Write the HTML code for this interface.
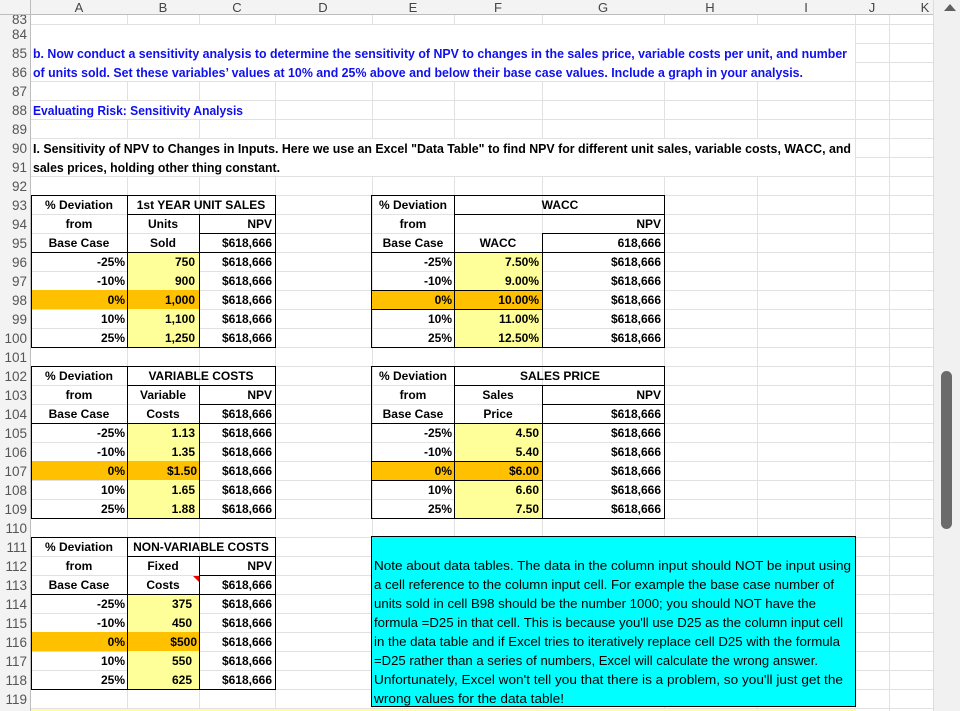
<!DOCTYPE html>
<html><head><meta charset="utf-8"><style>
html,body{margin:0;padding:0;background:#fff;width:960px;height:711px;overflow:hidden}
svg{display:block}
text{font-family:"Liberation Sans",sans-serif}
.h{font-size:13px;fill:#444;text-anchor:middle}
.r{font-size:13.5px;fill:#555;text-anchor:end}
.b{font-size:12px;font-weight:bold;fill:#000}
.c{text-anchor:middle}.e{text-anchor:end}
.n{font-size:12.5px;fill:#000}
.bl{font-size:12.5px;font-weight:bold;fill:#1010ee}
</style></head><body>
<svg width="960" height="711" viewBox="0 0 960 711" xmlns="http://www.w3.org/2000/svg">
<g stroke="#e1e1e1" stroke-width="1">
<line x1="127.5" y1="14" x2="127.5" y2="711"/><line x1="199.5" y1="14" x2="199.5" y2="711"/>
<line x1="275.5" y1="14" x2="275.5" y2="711"/><line x1="372.5" y1="14" x2="372.5" y2="711"/>
<line x1="454.5" y1="14" x2="454.5" y2="711"/><line x1="542.5" y1="14" x2="542.5" y2="711"/>
<line x1="664.5" y1="14" x2="664.5" y2="711"/><line x1="757.5" y1="14" x2="757.5" y2="711"/>
<line x1="855.5" y1="14" x2="855.5" y2="711"/><line x1="889.5" y1="14" x2="889.5" y2="711"/>
<line x1="933.5" y1="14" x2="933.5" y2="711"/>
<line x1="30" y1="24.5" x2="934" y2="24.5"/><line x1="30" y1="43.5" x2="934" y2="43.5"/><line x1="30" y1="62.5" x2="934" y2="62.5"/><line x1="30" y1="81.5" x2="934" y2="81.5"/><line x1="30" y1="100.5" x2="934" y2="100.5"/><line x1="30" y1="119.5" x2="934" y2="119.5"/><line x1="30" y1="138.5" x2="934" y2="138.5"/><line x1="30" y1="157.5" x2="934" y2="157.5"/><line x1="30" y1="176.5" x2="934" y2="176.5"/><line x1="30" y1="195.5" x2="934" y2="195.5"/><line x1="30" y1="214.5" x2="934" y2="214.5"/><line x1="30" y1="233.5" x2="934" y2="233.5"/><line x1="30" y1="252.5" x2="934" y2="252.5"/><line x1="30" y1="271.5" x2="934" y2="271.5"/><line x1="30" y1="290.5" x2="934" y2="290.5"/><line x1="30" y1="309.5" x2="934" y2="309.5"/><line x1="30" y1="328.5" x2="934" y2="328.5"/><line x1="30" y1="347.5" x2="934" y2="347.5"/><line x1="30" y1="366.5" x2="934" y2="366.5"/><line x1="30" y1="385.5" x2="934" y2="385.5"/><line x1="30" y1="404.5" x2="934" y2="404.5"/><line x1="30" y1="423.5" x2="934" y2="423.5"/><line x1="30" y1="442.5" x2="934" y2="442.5"/><line x1="30" y1="461.5" x2="934" y2="461.5"/><line x1="30" y1="480.5" x2="934" y2="480.5"/><line x1="30" y1="499.5" x2="934" y2="499.5"/><line x1="30" y1="518.5" x2="934" y2="518.5"/><line x1="30" y1="537.5" x2="934" y2="537.5"/><line x1="30" y1="556.5" x2="934" y2="556.5"/><line x1="30" y1="575.5" x2="934" y2="575.5"/><line x1="30" y1="594.5" x2="934" y2="594.5"/><line x1="30" y1="613.5" x2="934" y2="613.5"/><line x1="30" y1="632.5" x2="934" y2="632.5"/><line x1="30" y1="651.5" x2="934" y2="651.5"/><line x1="30" y1="670.5" x2="934" y2="670.5"/><line x1="30" y1="689.5" x2="934" y2="689.5"/><line x1="30" y1="708.5" x2="934" y2="708.5"/>
</g>
<rect x="31" y="25" width="824" height="56" fill="#fff"/>
<rect x="31" y="139" width="824" height="37" fill="#fff"/>
<rect x="31" y="101" width="240" height="18" fill="#fff"/>
<rect x="30" y="709" width="826" height="2" fill="#ffff99"/>

<rect x="0" y="14" width="30" height="697" fill="#f3f3f3"/>
<g class="r">
<text x="27" y="24">83</text><text x="27" y="39">84</text><text x="27" y="58">85</text><text x="27" y="77">86</text><text x="27" y="96">87</text><text x="27" y="115">88</text><text x="27" y="134">89</text><text x="27" y="153">90</text><text x="27" y="172">91</text><text x="27" y="191">92</text><text x="27" y="210">93</text><text x="27" y="229">94</text><text x="27" y="248">95</text><text x="27" y="267">96</text><text x="27" y="286">97</text><text x="27" y="305">98</text><text x="27" y="324">99</text><text x="27" y="343">100</text><text x="27" y="362">101</text><text x="27" y="381">102</text><text x="27" y="400">103</text><text x="27" y="419">104</text><text x="27" y="438">105</text><text x="27" y="457">106</text><text x="27" y="476">107</text><text x="27" y="495">108</text><text x="27" y="514">109</text><text x="27" y="533">110</text><text x="27" y="552">111</text><text x="27" y="571">112</text><text x="27" y="590">113</text><text x="27" y="609">114</text><text x="27" y="628">115</text><text x="27" y="647">116</text><text x="27" y="666">117</text><text x="27" y="685">118</text><text x="27" y="704">119</text>
</g>
<rect x="0" y="0" width="934" height="14" fill="#f3f3f3"/>
<line x1="0" y1="14.5" x2="934" y2="14.5" stroke="#bdbdbd"/>
<line x1="30.5" y1="0" x2="30.5" y2="711" stroke="#bdbdbd"/>
<g class="h">
<text x="79" y="12">A</text><text x="163" y="12">B</text><text x="237" y="12">C</text><text x="323" y="12">D</text><text x="413" y="12">E</text><text x="498" y="12">F</text><text x="603" y="12">G</text><text x="710" y="12">H</text><text x="806" y="12">I</text><text x="872" y="12">J</text><text x="925" y="12">K</text>
</g>

<text class="bl" x="33" y="58" textLength="814" lengthAdjust="spacingAndGlyphs">b.  Now conduct a sensitivity analysis to determine the sensitivity of NPV to changes in the sales price, variable costs per unit, and number</text>
<text class="bl" x="33" y="77" textLength="770" lengthAdjust="spacingAndGlyphs">of units sold.  Set these variables’ values at 10% and 25% above and below their base case values.  Include a graph in your analysis.</text>
<text class="bl" x="33" y="115" textLength="210" lengthAdjust="spacingAndGlyphs">Evaluating Risk:  Sensitivity Analysis</text>
<text class="b" x="33" y="153" textLength="818" lengthAdjust="spacingAndGlyphs" style="font-size:12.5px">I.  Sensitivity of NPV to Changes in Inputs.   Here we use an Excel "Data Table" to find NPV  for different unit sales, variable costs, WACC, and</text>
<text class="b" x="33" y="172" textLength="247" lengthAdjust="spacingAndGlyphs" style="font-size:12.5px">sales prices, holding other thing constant.</text>

<g transform="translate(0,195)">
<rect x="31" y="95" width="96" height="19" fill="#ffc000"/><rect x="128" y="95" width="71" height="19" fill="#ffc000"/>
<rect x="128" y="57" width="71" height="38" fill="#ffff99"/><rect x="128" y="114" width="71" height="38" fill="#ffff99"/>
<g stroke="#000" fill="none"><rect x="31.5" y="0.5" width="244" height="152"/><line x1="127.5" y1="0" x2="127.5" y2="152"/><line x1="199.5" y1="19" x2="199.5" y2="152"/><line x1="127" y1="19.5" x2="276" y2="19.5"/><line x1="199" y1="38.5" x2="276" y2="38.5"/><line x1="31" y1="57.5" x2="276" y2="57.5"/></g>
<g class="b"><text class="c" x="79" y="14">% Deviation</text><text class="c" x="79" y="33">from</text><text class="c" x="79" y="52">Base Case</text>
<text class="c" x="201" y="14">1st YEAR UNIT SALES</text><text class="c" x="163" y="33">Units</text><text class="c" x="163" y="52">Sold</text>
<text class="e" x="272" y="33">NPV</text><text class="e" x="272" y="52">$618,666</text>
<text class="e" x="125" y="71">-25%</text><text class="e" x="125" y="90">-10%</text><text class="e" x="125" y="109">0%</text><text class="e" x="125" y="128">10%</text><text class="e" x="125" y="147">25%</text>
<text class="e" x="195" y="71">750</text><text class="e" x="195" y="90">900</text><text class="e" x="195" y="109">1,000</text><text class="e" x="195" y="128">1,100</text><text class="e" x="195" y="147">1,250</text>
<text class="e" x="272" y="71">$618,666</text><text class="e" x="272" y="90">$618,666</text><text class="e" x="272" y="109">$618,666</text><text class="e" x="272" y="128">$618,666</text><text class="e" x="272" y="147">$618,666</text></g>
</g>

<g transform="translate(0,366)">
<rect x="31" y="95" width="96" height="19" fill="#ffc000"/><rect x="128" y="95" width="71" height="19" fill="#ffc000"/>
<rect x="128" y="57" width="71" height="38" fill="#ffff99"/><rect x="128" y="114" width="71" height="38" fill="#ffff99"/>
<g stroke="#000" fill="none"><rect x="31.5" y="0.5" width="244" height="152"/><line x1="127.5" y1="0" x2="127.5" y2="152"/><line x1="199.5" y1="19" x2="199.5" y2="152"/><line x1="127" y1="19.5" x2="276" y2="19.5"/><line x1="199" y1="38.5" x2="276" y2="38.5"/><line x1="31" y1="57.5" x2="276" y2="57.5"/></g>
<g class="b"><text class="c" x="79" y="14">% Deviation</text><text class="c" x="79" y="33">from</text><text class="c" x="79" y="52">Base Case</text>
<text class="c" x="201" y="14">VARIABLE COSTS</text><text class="c" x="163" y="33">Variable</text><text class="c" x="163" y="52">Costs</text>
<text class="e" x="272" y="33">NPV</text><text class="e" x="272" y="52">$618,666</text>
<text class="e" x="125" y="71">-25%</text><text class="e" x="125" y="90">-10%</text><text class="e" x="125" y="109">0%</text><text class="e" x="125" y="128">10%</text><text class="e" x="125" y="147">25%</text>
<text class="e" x="195" y="71">1.13</text><text class="e" x="195" y="90">1.35</text><text class="e" x="197" y="109">$1.50</text><text class="e" x="195" y="128">1.65</text><text class="e" x="195" y="147">1.88</text>
<text class="e" x="272" y="71">$618,666</text><text class="e" x="272" y="90">$618,666</text><text class="e" x="272" y="109">$618,666</text><text class="e" x="272" y="128">$618,666</text><text class="e" x="272" y="147">$618,666</text></g>
</g>

<g transform="translate(0,537)">
<rect x="31" y="95" width="96" height="19" fill="#ffc000"/><rect x="128" y="95" width="71" height="19" fill="#ffc000"/>
<rect x="128" y="57" width="71" height="38" fill="#ffff99"/><rect x="128" y="114" width="71" height="38" fill="#ffff99"/>
<g stroke="#000" fill="none"><rect x="31.5" y="0.5" width="244" height="152"/><line x1="127.5" y1="0" x2="127.5" y2="152"/><line x1="199.5" y1="19" x2="199.5" y2="152"/><line x1="127" y1="19.5" x2="276" y2="19.5"/><line x1="199" y1="38.5" x2="276" y2="38.5"/><line x1="31" y1="57.5" x2="276" y2="57.5"/></g>
<polygon points="193,39 199,39 199,45" fill="#e00"/>
<g class="b"><text class="c" x="79" y="14">% Deviation</text><text class="c" x="79" y="33">from</text><text class="c" x="79" y="52">Base Case</text>
<text class="c" x="201" y="14">NON-VARIABLE COSTS</text><text class="c" x="163" y="33">Fixed</text><text class="c" x="163" y="52">Costs</text>
<text class="e" x="272" y="33">NPV</text><text class="e" x="272" y="52">$618,666</text>
<text class="e" x="125" y="71">-25%</text><text class="e" x="125" y="90">-10%</text><text class="e" x="125" y="109">0%</text><text class="e" x="125" y="128">10%</text><text class="e" x="125" y="147">25%</text>
<text class="e" x="192" y="71">375</text><text class="e" x="192" y="90">450</text><text class="e" x="197" y="109">$500</text><text class="e" x="192" y="128">550</text><text class="e" x="192" y="147">625</text>
<text class="e" x="272" y="71">$618,666</text><text class="e" x="272" y="90">$618,666</text><text class="e" x="272" y="109">$618,666</text><text class="e" x="272" y="128">$618,666</text><text class="e" x="272" y="147">$618,666</text></g>
</g>

<g transform="translate(0,195)">
<rect x="372" y="95" width="82" height="19" fill="#ffc000"/><rect x="455" y="95" width="87" height="19" fill="#ffc000"/>
<rect x="455" y="57" width="87" height="38" fill="#ffff99"/><rect x="455" y="114" width="87" height="38" fill="#ffff99"/>
<g stroke="#000" fill="none"><rect x="371.5" y="0.5" width="293" height="152"/><line x1="454.5" y1="0" x2="454.5" y2="152"/><line x1="542.5" y1="38" x2="542.5" y2="152"/><line x1="454" y1="19.5" x2="665" y2="19.5"/><line x1="542" y1="38.5" x2="665" y2="38.5"/><line x1="371" y1="57.5" x2="665" y2="57.5"/><line x1="371" y1="95.5" x2="543" y2="95.5"/><line x1="371" y1="114.5" x2="543" y2="114.5"/></g>
<g class="b"><text class="c" x="413" y="14">% Deviation</text><text class="c" x="413" y="33">from</text><text class="c" x="413" y="52">Base Case</text>
<text class="c" x="560" y="14">WACC</text><text class="c" x="498" y="52">WACC</text>
<text class="e" x="661" y="33">NPV</text><text class="e" x="661" y="52">618,666</text>
<text class="e" x="452" y="71">-25%</text><text class="e" x="452" y="90">-10%</text><text class="e" x="452" y="109">0%</text><text class="e" x="452" y="128">10%</text><text class="e" x="452" y="147">25%</text>
<text class="e" x="539" y="71">7.50%</text><text class="e" x="539" y="90">9.00%</text><text class="e" x="539" y="109">10.00%</text><text class="e" x="539" y="128">11.00%</text><text class="e" x="539" y="147">12.50%</text>
<text class="e" x="661" y="71">$618,666</text><text class="e" x="661" y="90">$618,666</text><text class="e" x="661" y="109">$618,666</text><text class="e" x="661" y="128">$618,666</text><text class="e" x="661" y="147">$618,666</text></g>
</g>

<g transform="translate(0,366)">
<rect x="372" y="95" width="82" height="19" fill="#ffc000"/><rect x="455" y="95" width="87" height="19" fill="#ffc000"/>
<rect x="455" y="57" width="87" height="38" fill="#ffff99"/><rect x="455" y="114" width="87" height="38" fill="#ffff99"/>
<g stroke="#000" fill="none"><rect x="371.5" y="0.5" width="293" height="152"/><line x1="454.5" y1="0" x2="454.5" y2="152"/><line x1="542.5" y1="19" x2="542.5" y2="152"/><line x1="454" y1="19.5" x2="665" y2="19.5"/><line x1="542" y1="38.5" x2="665" y2="38.5"/><line x1="371" y1="57.5" x2="665" y2="57.5"/><line x1="371" y1="95.5" x2="543" y2="95.5"/><line x1="371" y1="114.5" x2="543" y2="114.5"/></g>
<g class="b"><text class="c" x="413" y="14">% Deviation</text><text class="c" x="413" y="33">from</text><text class="c" x="413" y="52">Base Case</text>
<text class="c" x="560" y="14">SALES PRICE</text><text class="c" x="498" y="33">Sales</text><text class="c" x="498" y="52">Price</text>
<text class="e" x="661" y="33">NPV</text><text class="e" x="661" y="52">$618,666</text>
<text class="e" x="452" y="71">-25%</text><text class="e" x="452" y="90">-10%</text><text class="e" x="452" y="109">0%</text><text class="e" x="452" y="128">10%</text><text class="e" x="452" y="147">25%</text>
<text class="e" x="539" y="71">4.50</text><text class="e" x="539" y="90">5.40</text><text class="e" x="539" y="109">$6.00</text><text class="e" x="539" y="128">6.60</text><text class="e" x="539" y="147">7.50</text>
<text class="e" x="661" y="71">$618,666</text><text class="e" x="661" y="90">$618,666</text><text class="e" x="661" y="109">$618,666</text><text class="e" x="661" y="128">$618,666</text><text class="e" x="661" y="147">$618,666</text></g>
</g>

<rect x="371.5" y="536.5" width="484" height="170" fill="#00ffff" stroke="#000"/>
<g class="n">
<text x="374" y="570" textLength="477" lengthAdjust="spacingAndGlyphs">Note about data tables.  The data in the column input should NOT be input using</text>
<text x="374" y="589" textLength="460" lengthAdjust="spacingAndGlyphs">a cell reference to the column input cell.  For example the base case number of</text>
<text x="374" y="608" textLength="442" lengthAdjust="spacingAndGlyphs">units sold in cell B98 should be the number 1000; you should NOT have the</text>
<text x="374" y="627" textLength="469" lengthAdjust="spacingAndGlyphs">formula =D25 in that cell.  This is because you'll use D25 as the column input cell</text>
<text x="374" y="646" textLength="466" lengthAdjust="spacingAndGlyphs">in the data table and if Excel tries to iteratively replace cell D25 with the formula</text>
<text x="374" y="665" textLength="444" lengthAdjust="spacingAndGlyphs">=D25 rather than a series of numbers, Excel will calculate the wrong answer.</text>
<text x="374" y="684" textLength="469" lengthAdjust="spacingAndGlyphs">Unfortunately, Excel won't tell you that there is a problem, so you'll just get the</text>
<text x="374" y="703" textLength="190" lengthAdjust="spacingAndGlyphs">wrong values for the data table!</text>
</g>

<rect x="934" y="0" width="26" height="711" fill="#f1f1f1"/>
<line x1="933.5" y1="0" x2="933.5" y2="711" stroke="#dcdcdc"/>
<polygon points="944,11 950,4 956,11" fill="#606060"/>
<rect x="941" y="371" width="11" height="158" rx="5.5" fill="#6b6b6b"/>
</svg>
</body></html>
